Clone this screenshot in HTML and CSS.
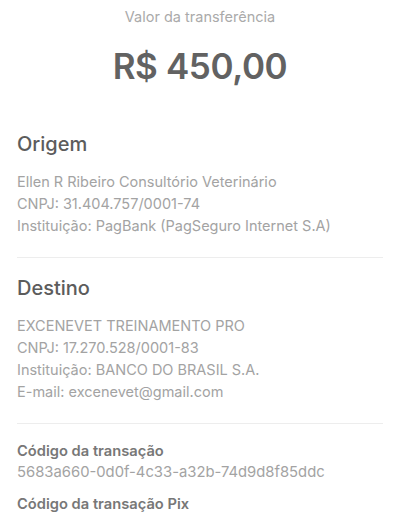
FILE: index.html
```html
<!DOCTYPE html>
<html lang="pt-BR">
<head>
  <meta charset="UTF-8" />
  <meta name="viewport" content="width=device-width, initial-scale=1.0"/>
  <title>Comprovante</title>
  <link rel="stylesheet" href="styles.css">
</head>
<body>
  <div class="amount-box">
    <div class="amount-label">Valor da transferência</div>
    <div class="amount-value">R$ 450,00</div>
  </div>

  <div class="section section-origin">
    <div class="section-title">Origem</div>
    <div class="info-line">Ellen R Ribeiro Consultório Veterinário</div>
    <div class="info-line">CNPJ: 31.404.757/0001-74</div>
    <div class="info-line">Instituição: PagBank (PagSeguro Internet S.A)</div>
  </div>

  <div class="section">
    <div class="section-title">Destino</div>
    <div class="info-line">EXCENEVET TREINAMENTO PRO</div>
    <div class="info-line">CNPJ: 17.270.528/0001-83</div>
    <div class="info-line">Instituição: BANCO DO BRASIL S.A.</div>
    <div class="info-line">E-mail: excenevet@gmail.com</div>
  </div>

  <div class="codes">
    <div class="code-item">
      <div class="code-label">Código da transação</div>
      <div class="code-value">5683a660-0d0f-4c33-a32b-74d9d8f85ddc</div>
    </div>
    <div class="code-item">
      <div class="code-label">Código da transação Pix</div>
    </div>
  </div>
</body>
</html>
```

FILE: styles.css
```css
body {
  margin: 0;
  padding: 0 17px;
  font-family: Inter, 'Noto Sans', sans-serif;
  background: #fff;
  color: #a3a3a3;
}

.amount-box {
  text-align: center;
  padding-top: 6px;
}

.amount-label {
  font-size: 14.5px;
  line-height: 22px;
  color: #aaa;
}

.amount-value {
  font-size: 35px;
  font-weight: 600;
  letter-spacing: -0.4px;
  line-height: 44px;
  margin-top: 16px;
  color: #626262;
}

.section {
  border-bottom: 1px solid #ededed;
  padding-bottom: 20px;
}

.section-origin {
  margin-top: 26px;
}

.section-title {
  font-size: 20px;
  font-weight: 500;
  line-height: 26px;
  color: #5c5c5c;
  padding-top: 17px;
  margin-bottom: 14px;
}

.info-line {
  font-size: 14.5px;
  line-height: 22px;
}

.codes {
  padding-top: 17px;
}

.code-item {
  margin-bottom: 12px;
}

.code-label {
  font-size: 14.7px;
  font-weight: 600;
  line-height: 20px;
  margin-bottom: 1px;
  color: #777;
}

.code-value {
  font-size: 14.8px;
  line-height: 20px;
  color: #a3a3a3;
}
```
